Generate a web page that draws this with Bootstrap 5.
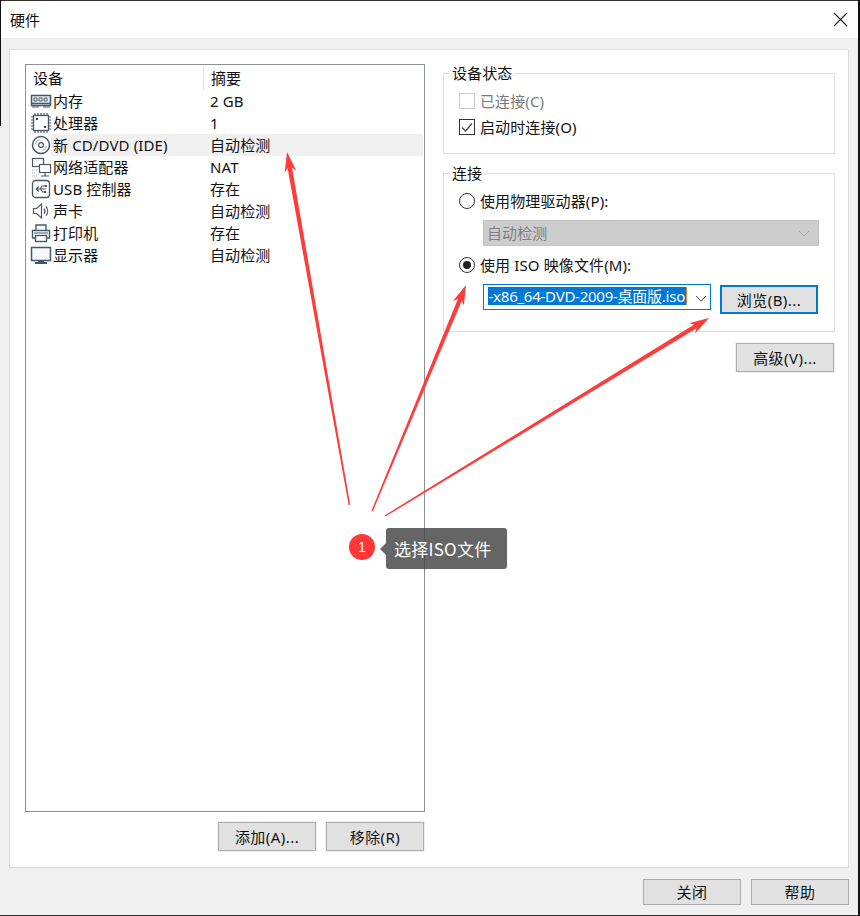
<!DOCTYPE html>
<html lang="zh-CN">
<head>
<meta charset="utf-8">
<title>硬件</title>
<link href="https://cdn.jsdelivr.net/npm/bootstrap@5.3.0/dist/css/bootstrap.min.css" rel="stylesheet">
<style>
html,body{margin:0;padding:0;background:#fff;overflow:hidden}
body{font-family:"Noto Sans","Noto Sans CJK SC",sans-serif;font-size:15px;line-height:22px;color:#111;letter-spacing:.12px}
.dlg{width:860px;height:916px;background:#f0f0f0;position:relative;border-right:2px solid #111;border-bottom:1px solid #333}
.dlg-left{position:absolute;left:0;top:0;width:1px;height:126px;background:#111}
.dlg-title{height:38px;background:#fff;padding:9px 0 0 10px;line-height:22px;box-shadow:inset 0 1px 0 #333}
.dlg-x{width:15px;height:15px;margin:3px 10px 0 0}
.dlg-main{height:819px;margin:11px 9px 0 9px;background:#fff;border:1px solid #dcdcdc;padding:14px 13px 0 15px}
.leftcol{width:400px;flex:none}
.devlist{height:748px;border:1px solid #8c8f94;padding:1px 1px 0 0}
.devhead{height:24px;margin-bottom:0}
.devhead span{display:block;padding-left:7px;line-height:24px}
.head-a{width:178px;border-right:1px solid #e4e4e4}
.devrow{height:22px}
.devicon{width:25px;height:22px;padding-left:4px;flex:none}
.devicon svg{display:block}
.devtext{padding-left:2px}
.devtext.sel{background:#f0f0f0}
.devname{width:157px;flex:none;white-space:nowrap}
.winbtn{display:flex;align-items:center;justify-content:center;width:98px;background:#e1e1e1;border:1px solid #adadad;box-shadow:0 0 0 1px #f0f0f0;border-radius:0;padding:0;font-size:15px;color:#111;line-height:20px;letter-spacing:.45px}
.h29{height:29px}
.h26{height:26px}
.lowbtns{margin-top:10px;gap:10px;padding-right:1px}
.rightcol{width:392px;margin-left:18px;flex:none}
.grp{border:1px solid #dcdcdc;position:relative}
.grp-a{height:81px;margin-top:9px;padding:14px 15px 0}
.grp-b{height:159px;margin-top:19px;padding:14px 15px 0}
.grp-t{position:absolute;left:6px;top:-12px;background:#fff;padding:0 2px;line-height:22px}
.optrow{height:26px;gap:5px;white-space:nowrap}
.cb{width:16px;height:16px;border:1px solid #333;flex:none;display:block}
.cb.off{border-color:#ccc}
.rd{width:16px;height:16px;border:1px solid #333;border-radius:50%;flex:none;position:relative}
.rd.on::after{content:"";position:absolute;left:3px;top:3px;width:8px;height:8px;border-radius:50%;background:#222}
.muted{color:#7a7a7a}
.combo-off{height:26px;margin:6px 0 6px 24px;width:336px;background:#ccc;border:1px solid #c4c4c4;padding:0 8px 0 3px;color:#808080}
.combo-iso{width:228px;height:26px;border:1px solid #0078d7;background:#fff;padding:2px 0 0 4px;margin-left:24px}
.isotxt{width:199px;height:18px;background:#0078d7;color:#fff;overflow:hidden;white-space:nowrap;flex:none;line-height:18px;font-size:15px;border-right:1px solid #e08a2c;letter-spacing:-.25px;padding-right:1px}
.isotxt span{flex:none}
.isorow{margin-top:6px}
.isobtn{height:29px;margin:1px 0 0 9px;border:2px solid #0078d7;box-shadow:none}
.adv{margin-top:11px;margin-right:1px}
.dlg-foot{height:47px;padding:11px 9px 0 0;gap:10px}
.overlay{position:absolute;left:0;top:0;width:860px;height:916px;pointer-events:none}
.pin{position:absolute;left:349px;top:534px;width:26px;height:26px;border-radius:50%;background:#ff3737;color:#fff;font-size:14px;line-height:26px;text-align:center;font-family:"Liberation Sans",sans-serif}
.tip{position:absolute;left:386px;top:528px;width:121px;height:41px;border-radius:3px;background:rgba(70,70,70,.83);color:#fff;font-size:17px;line-height:41px;padding-left:8px;white-space:nowrap;font-family:"Noto Sans CJK SC","Noto Sans",sans-serif;letter-spacing:.25px}
.tip::before{content:"";position:absolute;left:-6px;top:15px;border:6px solid transparent;border-left:0;border-right-color:rgba(70,70,70,.83)}
</style>
</head>
<body>
<div class="dlg">
  <div class="dlg-left"></div>
  <div class="dlg-title d-flex justify-content-between">
    <span>硬件</span>
    <svg class="dlg-x" viewBox="0 0 15 15"><path d="M1 1 14 14M14 1 1 14" stroke="#222" stroke-width="1.1" fill="none"/></svg>
  </div>
  <div class="dlg-main d-flex">
    <div class="leftcol d-flex flex-column">
      <div class="devlist">
        <div class="devhead d-flex"><span class="head-a">设备</span><span>摘要</span></div>
        <div class="devrow d-flex">
          <div class="devicon"><svg width="22" height="22" viewBox="0 0 22 22" fill="none" stroke="#46586a"><rect x="1.500" y="5.500" width="19" height="10" fill="#e8edf1" stroke-width="1.500"/><path d="M4 8h3v3H4zM9 8h3v3H9zM14 8h3v3h-3z" fill="#fff" stroke-width="1"/><path d="M1 13.500h20" stroke-width="1.500"/><path d="M2 17h7M13 17h7" stroke-width="1"/></svg></div>
          <div class="devtext d-flex flex-grow-1"><span class="devname">内存</span><span>2 GB</span></div>
        </div>
        <div class="devrow d-flex">
          <div class="devicon"><svg width="22" height="22" viewBox="0 0 22 22" fill="none" stroke="#46586a"><rect x="3.500" y="3.500" width="15" height="15" stroke-width="1.300"/><path d="M5 1v2M8 1v2M11 1v2M14 1v2M17 1v2M5 19v2M8 19v2M11 19v2M14 19v2M17 19v2M1 5h2M1 8h2M1 11h2M1 14h2M1 17h2M19 5h2M19 8h2M19 11h2M19 14h2M19 17h2" stroke-width="1.200"/><path d="M6 6h2v2H6zM14 14h2v2h-2z" fill="#33414e" stroke="none"/></svg></div>
          <div class="devtext d-flex flex-grow-1"><span class="devname">处理器</span><span>1</span></div>
        </div>
        <div class="devrow d-flex">
          <div class="devicon"><svg width="22" height="22" viewBox="0 0 22 22" fill="none" stroke="#46586a"><circle cx="11" cy="11" r="8.500" stroke-width="1.500"/><circle cx="11" cy="11" r="2.400" stroke-width="1.200"/><path d="M5.500 10a6 6 0 0 1 4-4.500M16.500 12a6 6 0 0 1-4 4.500" stroke="#8ea3b3"/></svg></div>
          <div class="devtext sel d-flex flex-grow-1"><span class="devname">新 CD/DVD (IDE)</span><span>自动检测</span></div>
        </div>
        <div class="devrow d-flex">
          <div class="devicon"><svg width="22" height="22" viewBox="0 0 22 22" fill="none" stroke="#46586a"><rect x="2.500" y="2.500" width="11" height="8" fill="#fff" stroke-width="1.200"/><rect x="9.500" y="8.500" width="11" height="8" fill="#fff" stroke-width="1.200"/><path d="M15 17v3M11 20h8" stroke-width="1.200"/><path d="M2 14h5M2 17h4M2 20h6" stroke="#a3adb5" stroke-dasharray="1 1"/></svg></div>
          <div class="devtext d-flex flex-grow-1"><span class="devname">网络适配器</span><span>NAT</span></div>
        </div>
        <div class="devrow d-flex">
          <div class="devicon"><svg width="22" height="22" viewBox="0 0 22 22" fill="none" stroke="#46586a"><rect x="2.500" y="2.500" width="17" height="17" rx="3" stroke-width="1.300"/><path d="M6 11h10M6 11l3-2.500M6 11l3 2.500M10 11l2-3h3M10.500 11l2 3h2" stroke-width="1.100"/><path d="M15 7h2v2h-2zM14 13h2v2h-2z" fill="#46586a" stroke="none"/></svg></div>
          <div class="devtext d-flex flex-grow-1"><span class="devname">USB 控制器</span><span>存在</span></div>
        </div>
        <div class="devrow d-flex">
          <div class="devicon"><svg width="22" height="22" viewBox="0 0 22 22" fill="none" stroke="#46586a"><path d="M3.500 8.500h3l5-4.500v14l-5-4.500h-3z" stroke-width="1.200"/><path d="M14 8.500a4 4 0 0 1 0 5M16 6.500a7 7 0 0 1 0 9" stroke-width="1.200"/></svg></div>
          <div class="devtext d-flex flex-grow-1"><span class="devname">声卡</span><span>自动检测</span></div>
        </div>
        <div class="devrow d-flex">
          <div class="devicon"><svg width="22" height="22" viewBox="0 0 22 22" fill="none" stroke="#46586a"><path d="M6 8V3h10v5M5.500 16H2.500V8.500h17V16h-3" stroke-width="1.400"/><rect x="5.500" y="13.500" width="11" height="6" stroke-width="1.400"/><path d="M4 11h14" stroke-width="1"/></svg></div>
          <div class="devtext d-flex flex-grow-1"><span class="devname">打印机</span><span>存在</span></div>
        </div>
        <div class="devrow d-flex">
          <div class="devicon"><svg width="22" height="22" viewBox="0 0 22 22" fill="none" stroke="#46586a"><rect x="1.500" y="3.500" width="19" height="13" stroke-width="1.500" fill="#f5f7f8"/><path d="M5 19h12" stroke-width="2"/><path d="M8 17.500h6" stroke-width="1.500"/></svg></div>
          <div class="devtext d-flex flex-grow-1"><span class="devname">显示器</span><span>自动检测</span></div>
        </div>
      </div>
      <div class="d-flex justify-content-end lowbtns">
        <button type="button" class="winbtn h29">添加(A)...</button>
        <button type="button" class="winbtn h29">移除(R)</button>
      </div>
    </div>
    <div class="rightcol d-flex flex-column">
      <div class="grp grp-a">
        <div class="grp-t">设备状态</div>
        <div class="optrow d-flex align-items-center muted"><span class="cb off"></span><span>已连接(C)</span></div>
        <div class="optrow d-flex align-items-center">
          <svg class="cb" viewBox="0 0 14 14"><path d="M2 7.500 5.500 11 12 3.500" fill="none" stroke="#444" stroke-width="1.300"/></svg>
          <span>启动时连接(O)</span>
        </div>
      </div>
      <div class="grp grp-b">
        <div class="grp-t">连接</div>
        <div class="optrow d-flex align-items-center"><span class="rd"></span><span>使用物理驱动器(P):</span></div>
        <div class="combo-off d-flex justify-content-between align-items-center"><span>自动检测</span>
          <svg width="12" height="7" viewBox="0 0 12 7"><path d="M1 1l5 5 5-5" fill="none" stroke="#aaa"/></svg></div>
        <div class="optrow d-flex align-items-center"><span class="rd on"></span><span>使用 ISO 映像文件(M):</span></div>
        <div class="d-flex isorow">
          <div class="combo-iso d-flex align-items-start">
            <div class="isotxt d-flex justify-content-end"><span>-x86_64-DVD-2009-桌面版.iso</span></div>
            <svg class="ms-2 mt-2" width="12" height="7" viewBox="0 0 12 7"><path d="M1 1l5 5 5-5" fill="none" stroke="#444"/></svg>
          </div>
          <button type="button" class="winbtn isobtn">浏览(B)...</button>
        </div>
      </div>
      <div class="d-flex justify-content-end">
        <button type="button" class="winbtn h29 adv">高级(V)...</button>
      </div>
    </div>
  </div>
  <div class="dlg-foot d-flex justify-content-end">
    <button type="button" class="winbtn h26">关闭</button>
    <button type="button" class="winbtn h26">帮助</button>
  </div>

  <svg class="overlay" viewBox="0 0 860 916" fill="#ff3b3b">
    <polygon points="348.700,505.200 350.200,504.800 292,167.400 296.400,170.700 287,152 284.600,172.700 287.600,168.200"/>
    <polygon points="371.400,510.800 372.800,511.300 461.900,300.600 463.800,305.800 466,285 452.800,301.200 457.900,299"/>
    <polygon points="384.600,515.400 385.400,516.600 696.600,328.200 695,333.500 709,318 688.800,323.300 694.300,324.400"/>
  </svg>
  <div class="pin">1</div>
  <div class="tip">选择ISO文件</div>
</div>
</body>
</html>
